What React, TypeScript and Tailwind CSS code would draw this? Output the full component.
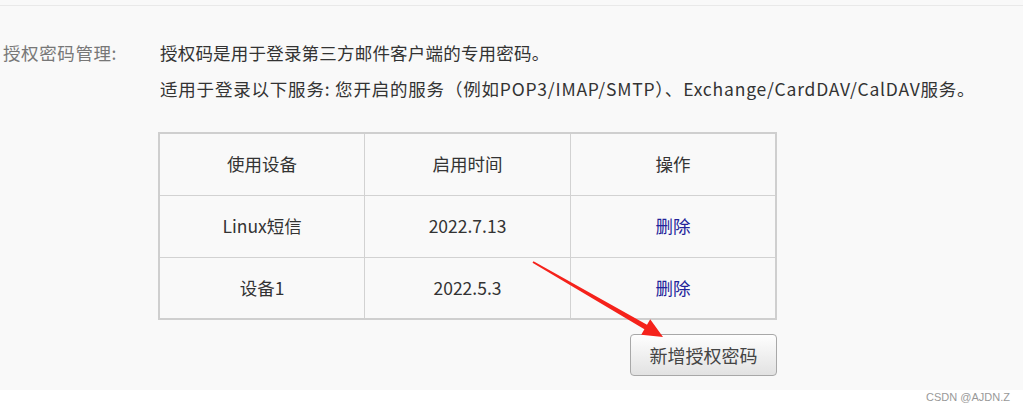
import React from "react";

const FONT = '"Noto Sans CJK SC", "Noto Sans", sans-serif';

function Arrow() {
  return (
    <svg
      className="absolute left-0 top-0 pointer-events-none"
      width={1023}
      height={410}
      viewBox="0 0 1023 410"
    >
      <polygon
        points="533.5,261.2 647,324.8 650.2,319.2 663,337 641.2,334.8 644.4,329.2 532.5,262.8"
        fill="#f5221b"
      />
    </svg>
  );
}

export default function App() {
  const rows = [
    { d: "Linux短信", t: "2022.7.13" },
    { d: "设备1", t: "2022.5.3" },
  ];
  return (
    <div
      className="relative w-[1023px] h-[410px] bg-white overflow-hidden"
      style={{ fontFamily: FONT }}
    >
      <div className="h-[390px] bg-[#f9f9f9] flex flex-col">
        <div className="h-[5px] shrink-0" />
        <div className="h-px bg-[#e9e9e9] shrink-0" />
        <div className="flex pt-[29px]">
          <div className="w-[158px] pl-[3px] h-[36px] text-[17.5px] leading-[36px] tracking-[0.6px] text-[#777] whitespace-nowrap">
            授权密码管理:
          </div>
          <div className="flex flex-col">
            <div className="pl-[2px] h-[36px] text-[17.5px] leading-[36px] tracking-[0.2px] text-[#333] whitespace-nowrap">
              授权码是用于登录第三方邮件客户端的专用密码。
            </div>
            <div className="pl-[2px] h-[36px] text-[17.5px] leading-[36px] tracking-[0.8px] text-[#333] whitespace-nowrap">
              适用于登录以下服务: 您开启的服务（例如POP3/IMAP/SMTP）、Exchange/CardDAV/CalDAV服务。
            </div>
            <table className="mt-[25px] w-[619px] border-collapse border-2 border-[#cfcfcf] text-[17.5px] text-[#333] table-fixed">
              <tbody>
                <tr className="h-[62px]">
                  <td className="border border-[#d2d2d2] text-center">使用设备</td>
                  <td className="border border-[#d2d2d2] text-center">启用时间</td>
                  <td className="border border-[#d2d2d2] text-center">操作</td>
                </tr>
                {rows.map((r) => (
                  <tr key={r.d} className="h-[62px]">
                    <td className="border border-[#d2d2d2] text-center">{r.d}</td>
                    <td className="border border-[#d2d2d2] text-center">{r.t}</td>
                    <td className="border border-[#d2d2d2] text-center text-[#23239a]">删除</td>
                  </tr>
                ))}
              </tbody>
            </table>
            <div className="w-[619px] flex justify-end mt-[14px]">
              <button className="w-[147px] h-[42px] rounded-[4px] border border-[#a8a8a8] bg-gradient-to-b from-[#fefefe] to-[#e2e2e2] text-[18px] text-[#444]">
                新增授权密码
              </button>
            </div>
          </div>
        </div>
      </div>
      <div
        className="flex justify-end pr-[13px] text-[11px] leading-[14px] text-[#999]"
        style={{ fontFamily: '"Liberation Sans", sans-serif' }}
      >
        CSDN @AJDN.Z
      </div>
      <Arrow />
    </div>
  );
}
